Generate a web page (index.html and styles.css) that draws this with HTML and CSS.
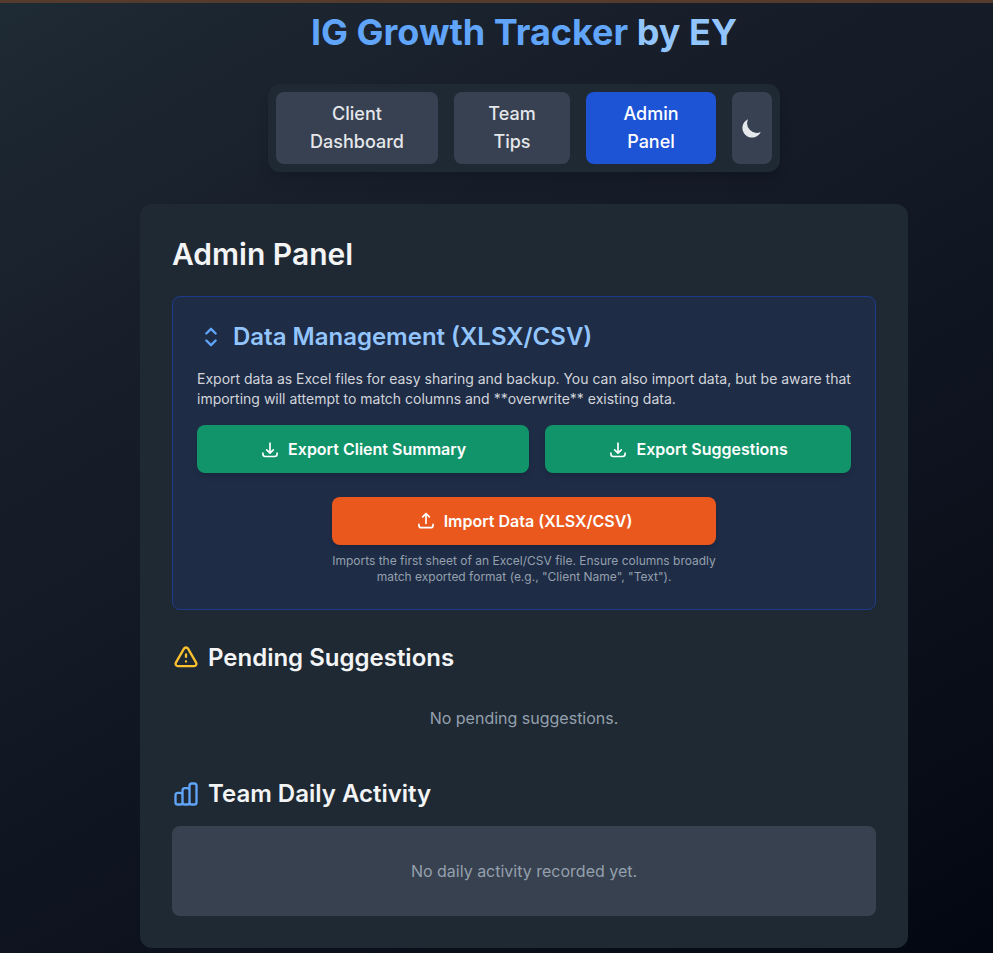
FILE: index.html
```html
<!DOCTYPE html>
<html lang="en">
<head>
<meta charset="utf-8">
<meta name="viewport" content="width=device-width, initial-scale=1">
<title>IG Growth Tracker by EY</title>
<link rel="stylesheet" href="styles.css">
</head>
<body>
<header class="header">
  <h1 class="title">IG Growth Tracker <span class="title-by">by EY</span></h1>
  <nav class="nav">
    <button class="tab" type="button">Client Dashboard</button>
    <button class="tab" type="button">Team Tips</button>
    <button class="tab tab-active" type="button">Admin Panel</button>
    <button class="tab tab-theme" type="button" aria-label="Toggle dark mode">
      <svg class="icon-moon" viewBox="0 0 20 20"><path d="M17.293 13.293A8 8 0 016.707 2.707a8.001 8.001 0 1010.586 10.586z"/></svg>
    </button>
  </nav>
</header>
<main class="panel">
  <h2 class="panel-title">Admin Panel</h2>
  <section class="data-box">
    <h3 class="heading heading-data">
      <svg class="icon blue" viewBox="0 0 24 24"><path d="M8 15l4 4 4-4M8 9l4-4 4 4"/></svg>
      Data Management (XLSX/CSV)
    </h3>
    <p class="description">Export data as Excel files for easy sharing and backup. You can also import data, but be aware that importing will attempt to match columns and **overwrite** existing data.</p>
    <div class="exports">
      <button class="action export" type="button">
        <svg class="icon-small" viewBox="0 0 24 24"><path d="M3.500 17v1a3 3 0 003 3h11a3 3 0 003-3v-1m-4.500-4l-4 4m0 0l-4-4m4 4V5"/></svg>
        Export Client Summary
      </button>
      <button class="action export" type="button">
        <svg class="icon-small" viewBox="0 0 24 24"><path d="M3.500 17v1a3 3 0 003 3h11a3 3 0 003-3v-1m-4.500-4l-4 4m0 0l-4-4m4 4V5"/></svg>
        Export Suggestions
      </button>
    </div>
    <div class="import-group">
      <button class="action import" type="button">
        <svg class="icon-small" viewBox="0 0 24 24"><path d="M3.500 16v1a3 3 0 003 3h11a3 3 0 003-3v-1M16 7l-4-4m0 0L8 7m4-4v12"/></svg>
        Import Data (XLSX/CSV)
      </button>
      <p class="hint">Imports the first sheet of an Excel/CSV file. Ensure columns broadly match exported format (e.g., "Client Name", "Text").</p>
    </div>
  </section>
  <section class="section">
    <h3 class="heading">
      <svg class="icon yellow" viewBox="0 0 24 24"><path d="M12 9v2m0 4h.01m-6.938 4h13.856c1.54 0 2.502-1.667 1.732-3L13.732 4c-.77-1.333-2.694-1.333-3.464 0L3.34 16c-.77 1.333.192 3 1.732 3z"/></svg>
      Pending Suggestions
    </h3>
    <p class="empty">No pending suggestions.</p>
  </section>
  <section class="section">
    <h3 class="heading">
      <svg class="icon blue" viewBox="0 0 24 24"><path d="M9 19v-6a2 2 0 00-2-2H5a2 2 0 00-2 2v6a2 2 0 002 2h2a2 2 0 002-2zm0 0V9a2 2 0 012-2h2a2 2 0 012 2v10m-6 0a2 2 0 002 2h2a2 2 0 002-2m0 0V5a2 2 0 012-2h2a2 2 0 012 2v14a2 2 0 01-2 2h-2a2 2 0 01-2-2z"/></svg>
      Team Daily Activity
    </h3>
    <p class="empty empty-card">No daily activity recorded yet.</p>
  </section>
</main>
</body>
</html>
```
FILE: styles.css
```css
* {
  box-sizing: border-box;
  margin: 0;
}

body {
  min-height: 100vh;
  padding: 0 0 5px 55px;
  border-top: 3px solid #553a2e;
  background: linear-gradient(150deg, #1e2a34, #181f2b 25%, #0f1520 60%, #030712) border-box;
  color: #f3f4f6;
  font-family: Inter, sans-serif;
  font-size: 16px;
  line-height: 24px;
}

svg {
  flex: none;
  fill: none;
  stroke: currentColor;
  stroke-width: 2;
  stroke-linecap: round;
  stroke-linejoin: round;
}

button {
  border: 0;
  border-radius: 8px;
  font: inherit;
  cursor: pointer;
}

.header {
  display: flex;
  flex-direction: column;
  align-items: center;
  gap: 32px;
  padding: 9px 0 32px;
}

.title {
  color: #60a5fa;
  font-size: 36px;
  font-weight: 700;
  line-height: 40px;
}

.title-by {
  color: #93c5fd;
}

.nav {
  display: grid;
  grid-template-columns: 162fr 116fr 130fr 40px;
  gap: 16px;
  width: 100%;
  max-width: 512px;
  padding: 8px;
  border-radius: 12px;
  background: #1f2933;
  box-shadow: 0 10px 15px -3px rgb(0 0 0 / 10%), 0 4px 6px -4px rgb(0 0 0 / 10%);
}

.tab {
  padding: 8px 24px;
  background: #374151;
  color: #e5e7eb;
  font-size: 18px;
  font-weight: 500;
  line-height: 28px;
}

.tab-active {
  background: #1d54d5;
  color: #fff;
}

.tab-theme {
  display: flex;
  align-items: center;
  justify-content: center;
  padding: 8px;
}

.panel {
  max-width: 768px;
  margin: 0 auto;
  padding: 32px;
  border-radius: 12px;
  background: #1f2933;
}

.panel-title {
  margin-bottom: 24px;
  font-size: 30px;
  font-weight: 600;
  line-height: 36px;
}

.data-box {
  padding: 24px;
  border: 1px solid #1e3a8a;
  border-radius: 8px;
  background: #1f2c46;
}

.heading {
  display: flex;
  align-items: center;
  gap: 8px;
  margin-bottom: 16px;
  font-size: 24px;
  font-weight: 600;
  line-height: 32px;
}

.heading-data {
  color: #93c5fd;
}

.icon {
  width: 28px;
  height: 28px;
}

.icon-small {
  width: 20px;
  height: 20px;
}

.icon-moon {
  width: 24px;
  height: 24px;
  fill: currentColor;
  stroke: none;
}

.blue {
  color: #60a5fa;
}

.yellow {
  color: #fbc22f;
}

.description {
  margin-bottom: 16px;
  color: #d1d5db;
  font-size: 14px;
  line-height: 20px;
}

.exports {
  display: flex;
  gap: 16px;
  margin-bottom: 24px;
}

.action {
  display: flex;
  align-items: center;
  justify-content: center;
  gap: 8px;
  padding: 12px 24px;
  color: #fff;
  font-weight: 600;
  box-shadow: 0 4px 6px -1px rgb(0 0 0 / 10%), 0 2px 4px -2px rgb(0 0 0 / 10%);
}

.export {
  flex: 1 1 auto;
  background: #12946a;
}

.import-group {
  max-width: 384px;
  margin: 0 auto;
}

.import {
  width: 100%;
  background: #ea581e;
}

.hint {
  margin-top: 8px;
  color: #94a0ad;
  font-size: 12px;
  line-height: 16px;
  text-align: center;
}

.section {
  margin-top: 32px;
}

.empty {
  padding: 16px;
  color: #94a0ad;
  text-align: center;
}

.empty-card {
  padding: 33px;
  border-radius: 8px;
  background: #38414f;
}
```
